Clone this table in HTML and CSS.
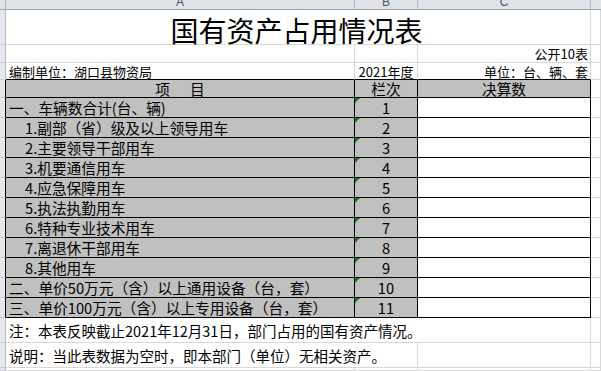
FILE: index.html
```html
<!DOCTYPE html>
<html lang="zh-CN">
<head>
<meta charset="utf-8">
<title>国有资产占用情况表</title>
<link rel="stylesheet" href="styles.css">
</head>
<body>
<div class="sheet">
  <div class="hd"></div>
  <div class="hd"><span>A</span></div>
  <div class="hd"><span>B</span></div>
  <div class="hd"><span>C</span></div>
  <div class="hd last"></div>

  <div class="rh"></div>
  <div class="c title span3">国有资产占用情况表</div>
  <div class="c"></div>

  <div class="rh"></div>
  <div class="c"></div>
  <div class="c"></div>
  <div class="c sm right">公开10表</div>
  <div class="c"></div>

  <div class="rh"></div>
  <div class="c sm left edge">编制单位：湖口县物资局</div>
  <div class="c sm center edge">2021年度</div>
  <div class="c sm right edge">单位：台、辆、套</div>
  <div class="c"></div>

  <div class="rh tb"></div>
  <div class="t g center hrow"><span class="gapr">项</span>目</div>
  <div class="t g center hrow">栏次</div>
  <div class="t g center hrow">决算数</div>
  <div class="c"></div>

  <div class="rh tb"></div>
  <div class="t g left">一、车辆数合计(台、辆)</div>
  <div class="t g center mark">1</div>
  <div class="t"></div>
  <div class="c"></div>

  <div class="rh tb"></div>
  <div class="t g left sub">1.副部（省）级及以上领导用车</div>
  <div class="t g center mark">2</div>
  <div class="t"></div>
  <div class="c"></div>

  <div class="rh tb"></div>
  <div class="t g left sub">2.主要领导干部用车</div>
  <div class="t g center mark">3</div>
  <div class="t"></div>
  <div class="c"></div>

  <div class="rh tb"></div>
  <div class="t g left sub">3.机要通信用车</div>
  <div class="t g center mark">4</div>
  <div class="t"></div>
  <div class="c"></div>

  <div class="rh tb"></div>
  <div class="t g left sub">4.应急保障用车</div>
  <div class="t g center mark">5</div>
  <div class="t"></div>
  <div class="c"></div>

  <div class="rh tb"></div>
  <div class="t g left sub">5.执法执勤用车</div>
  <div class="t g center mark">6</div>
  <div class="t"></div>
  <div class="c"></div>

  <div class="rh tb"></div>
  <div class="t g left sub">6.特种专业技术用车</div>
  <div class="t g center mark">7</div>
  <div class="t"></div>
  <div class="c"></div>

  <div class="rh tb"></div>
  <div class="t g left sub">7.离退休干部用车</div>
  <div class="t g center mark">8</div>
  <div class="t"></div>
  <div class="c"></div>

  <div class="rh tb"></div>
  <div class="t g left sub">8.其他用车</div>
  <div class="t g center mark">9</div>
  <div class="t"></div>
  <div class="c"></div>

  <div class="rh tb"></div>
  <div class="t g left">二、单价50万元（含）以上通用设备（台，套）</div>
  <div class="t g center mark">10</div>
  <div class="t"></div>
  <div class="c"></div>

  <div class="rh tb"></div>
  <div class="t g left">三、单价100万元（含）以上专用设备（台，套）</div>
  <div class="t g center mark">11</div>
  <div class="t"></div>
  <div class="c"></div>

  <div class="rh"></div>
  <div class="c note span3">注：本表反映截止2021年12月31日，部门占用的国有资产情况。</div>
  <div class="c"></div>

  <div class="rh"></div>
  <div class="c note span2">说明：当此表数据为空时，即本部门（单位）无相关资产。</div>
  <div class="c"></div>
  <div class="c"></div>

  <div class="rh"></div>
  <div class="c"></div>
  <div class="c"></div>
  <div class="c"></div>
  <div class="c"></div>
</div>
</body>
</html>
```

FILE: styles.css
```css
html, body {
  margin: 0;
  padding: 0;
  background: #ffffff;
}

body {
  width: 601px;
  height: 371px;
  overflow: hidden;
  font-family: "Noto Sans CJK SC", "Liberation Sans", sans-serif;
  color: #000;
}

.sheet {
  display: grid;
  grid-template-columns: 6px 349px 63px 173px 10px;
  grid-template-rows: 10px 35px 18px 17px 18px repeat(11, 20px) 25px 25px 3px;
}

.sheet > div {
  box-sizing: border-box;
  white-space: nowrap;
  overflow: visible;
  display: flex;
  align-items: center;
  min-width: 0;
}

/* column header */
.hd {
  background: #dfe3e8;
  border-right: 1px solid #b4bac2;
  border-bottom: 1px solid #9da4ac;
  justify-content: center;
  align-items: flex-end !important;
  overflow: hidden !important;
  padding-bottom: 1px;
  font-family: "Liberation Sans", sans-serif;
  font-size: 12px;
  line-height: 12px;
  color: #4b5662;
}

.hd.last {
  border-right: none;
}

/* row header */
.rh {
  background: #e4e7eb;
  border-right: 1px solid #b4bac2;
  border-bottom: 1px solid #c9cdd3;
}

.rh.tb {
  border-right-color: #000;
}

/* ordinary cell with gridlines */
.c {
  background: #fff;
  border-right: 1px solid #d8d8d8;
  border-bottom: 1px solid #d8d8d8;
}

.c.edge {
  border-bottom-color: #000;
}

/* table cell */
.t {
  background: #fff;
  border-right: 1px solid #000;
  border-bottom: 1px solid #000;
  font-size: 14.7px;
  line-height: 18px;
}

.t.hrow {
  line-height: 16px;
  padding-top: 1px;
}

.g {
  background: #c0c0c0;
}

.span3 {
  grid-column: span 3;
}

.span2 {
  grid-column: span 2;
}

.left {
  justify-content: flex-start;
  padding-left: 3px;
}

.sub {
  padding-left: 19px;
}

.center {
  justify-content: center;
}

.right {
  justify-content: flex-end;
  padding-right: 2px;
}

.sm {
  font-size: 13px;
  line-height: 15px;
}

.title {
  justify-content: center;
  align-items: flex-end !important;
  font-size: 28px;
  line-height: 28px;
  padding-right: 3px;
}

.note {
  font-size: 14.5px;
  line-height: 18px;
  padding-left: 3px;
  padding-top: 1px;
}

.gapr {
  margin-right: 20px;
}

.mark {
  position: relative;
}

.mark::before {
  content: "";
  position: absolute;
  top: 0;
  left: 0;
  width: 0;
  height: 0;
  border-top: 5px solid #1f7a1f;
  border-right: 5px solid transparent;
}
```
